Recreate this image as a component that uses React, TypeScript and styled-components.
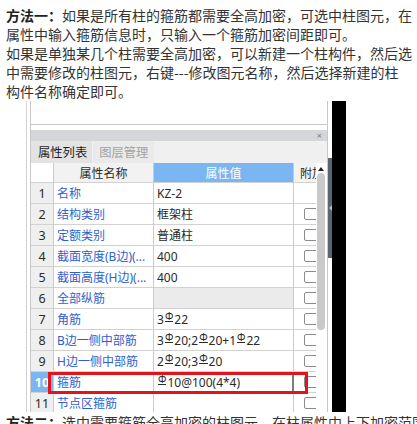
import React from 'react'
import styled, { createGlobalStyle } from 'styled-components'

const GlobalStyle = createGlobalStyle`
  html, body {
    margin: 0;
    padding: 0;
    background: #fff;
  }
`

const Page = styled.div`
  width: 417px;
  height: 424px;
  overflow: hidden;
  padding: 6px 0 0 6px;
  box-sizing: border-box;
  font-family: 'Noto Sans CJK SC', sans-serif;
  color: #333;
`

const Para = styled.p`
  margin: 0;
  font-size: 14px;
  line-height: 19px;
  white-space: nowrap;

  b {
    font-weight: 700;
    color: #222;
  }
`

const Shot = styled.div`
  display: flex;
  height: 311px;
  margin-left: 20px;
  overflow: hidden;
`

const Frame = styled.div`
  width: 302px;
  box-sizing: border-box;
  border-left: 1px solid #d2d2d2;
  padding-left: 3px;
`

const Panel = styled.div`
  height: 100%;
  box-sizing: border-box;
  border-left: 1px solid #c8c8c8;
  border-right: 1px solid #c8c8c8;
  display: flex;
  flex-direction: column;
  font-family: 'Noto Sans', 'Noto Sans CJK SC', sans-serif;
  font-size: 12px;
  color: #333;
`

const TopBox = styled.div`
  height: 24px;
  flex: none;
  box-sizing: border-box;
  border-bottom: 1px solid #c8c8c8;
  margin-bottom: 5px;
`

const TitleBar = styled.div`
  height: 11px;
  flex: none;
  background: #d4d6d9;
  display: flex;
  justify-content: flex-end;
  align-items: center;
  padding-right: 5px;
  font-size: 9px;
  line-height: 1;
  color: #7a7a7a;
`

const TabRow = styled.div`
  height: 22px;
  flex: none;
  display: flex;
  background: #f0f0f0;
`

const Tab = styled.div<{ $active?: boolean }>`
  display: flex;
  align-items: center;
  padding: ${(p) => (p.$active ? '0 5px 0 7px' : '0 6px')};
  background: ${(p) => (p.$active ? '#e3e3e3' : '#eaeaea')};
  color: ${(p) => (p.$active ? '#1e1e1e' : '#a2a2a2')};
  font-family: 'Noto Sans CJK SC', sans-serif;
  font-size: 12.3px;
  margin-right: ${(p) => (p.$active ? '1px' : '0')};
`

const Body = styled.div`
  flex: 1;
  display: flex;
  padding-right: 2px;
  min-height: 0;
`

const TableArea = styled.div`
  position: relative;
  width: 285px;
  flex: none;
`

const Grid = styled.div`
  display: grid;
  grid-template-columns: 23px 100px 140px 22px;
`

type Tone = 'num' | 'head' | 'blue' | 'name' | 'value' | 'gray' | 'pick' | 'corner'

const toneBg: Record<Tone, string> = {
  num: '#efefef',
  head: '#f2f2f2',
  blue: '#7ab6f2',
  name: '#fff',
  value: '#fff',
  gray: '#ebebeb',
  pick: '#7ab6f2',
  corner: '#fff',
}

const Cell = styled.div<{ $tone: Tone; $head?: boolean; $edit?: boolean }>`
  height: ${(p) => (p.$head ? '20px' : '21px')};
  box-sizing: border-box;
  border-right: ${(p) => (p.$edit ? '2px solid #7c7c7c' : '1px solid #cbcbcb')};
  border-bottom: 1px solid #d2d2d2;
  background: ${(p) => toneBg[p.$tone]};
  display: flex;
  align-items: center;
  overflow: hidden;
  white-space: nowrap;
  padding: 0 3px;
  justify-content: ${(p) =>
    p.$head || p.$tone === 'num' || p.$tone === 'pick' ? 'center' : 'flex-start'};
  color: ${(p) =>
    p.$tone === 'blue' || p.$tone === 'pick'
      ? '#fff'
      : p.$tone === 'name'
        ? '#2f5fcf'
        : '#2a2a2a'};
  font-weight: ${(p) => (p.$tone === 'pick' ? 700 : 400)};
  font-size: ${(p) => (p.$tone === 'num' || p.$tone === 'pick' ? '12.5px' : '12px')};
`

const AttachCell = styled(Cell)`
  padding: 0 0 0 10px;
  justify-content: flex-start;
  border-right: none;
`

const HeadLabel = styled.span`
  font-family: 'Noto Sans CJK SC', sans-serif;
`

const Check = styled.span`
  width: 15px;
  height: 12px;
  flex: none;
  box-sizing: border-box;
  border: 1px solid #8c8c8c;
  border-radius: 2px;
  background: #fff;
`

const Rebar = styled.span`
  display: inline-block;
  font-size: 10px;
  line-height: 9px;
  border-bottom: 1px solid #2a2a2a;
  margin: 0 1px;
  position: relative;
  top: -2px;
`

const Highlight = styled.div`
  position: absolute;
  left: 17px;
  top: 209px;
  width: 260px;
  height: 22px;
  box-sizing: border-box;
  border: 3px solid #e3131b;
  pointer-events: none;
`

const Scroll = styled.div`
  width: 9px;
  flex: none;
  display: flex;
  flex-direction: column;
  align-items: center;
`

const ScrollArrow = styled.div`
  margin-top: 4px;
  width: 0;
  height: 0;
  border-left: 3.5px solid transparent;
  border-right: 3.5px solid transparent;
  border-bottom: 4px solid #222;
`

const ScrollThumb = styled.div`
  margin-top: 2px;
  width: 8px;
  height: 157px;
  border-radius: 4px;
  background: #c9c9c9;
`

const Side = styled.div`
  width: 4px;
  flex: none;
  display: flex;
  flex-direction: column;
`

const SideHandle = styled.div`
  margin-top: 57px;
  height: 100px;
  background: #5b6570;
  display: flex;
  align-items: center;
  justify-content: flex-end;

  &::after {
    content: '';
    border-top: 3px solid transparent;
    border-bottom: 3px solid transparent;
    border-right: 3px solid #b4bac0;
  }
`

const BlackBar = styled.div`
  width: 14px;
  flex: none;
  background: #000;
`

const Footer = styled(Para)`
  margin-top: 1px;
`

const R = () => <Rebar>Φ</Rebar>

type Row = { name: string; value: React.ReactNode; gray?: boolean; check: boolean }

const rows: Row[] = [
  { name: '名称', value: 'KZ-2', check: false },
  { name: '结构类别', value: '框架柱', check: true },
  { name: '定额类别', value: '普通柱', check: true },
  { name: '截面宽度(B边)(...', value: '400', check: true },
  { name: '截面高度(H边)(...', value: '400', check: true },
  { name: '全部纵筋', value: '', gray: true, check: true },
  { name: '角筋', value: <>3<R />22</>, check: true },
  { name: 'B边一侧中部筋', value: <>3<R />20;2<R />20+1<R />22</>, check: true },
  { name: 'H边一侧中部筋', value: <>2<R />20;3<R />20</>, check: true },
  { name: '箍筋', value: <><R />10@100(4*4)</>, check: true },
  { name: '节点区箍筋', value: '', check: true },
]

export default function App() {
  return (
    <>
      <GlobalStyle />
      <Page>
        <Para>
          <b>方法一：</b>如果是所有柱的箍筋都需要全高加密，可选中柱图元，在
          <br />
          属性中输入箍筋信息时，只输入一个箍筋加密间距即可。
        </Para>
        <Para>
          如果是单独某几个柱需要全高加密，可以新建一个柱构件，然后选
          <br />
          中需要修改的柱图元，右键---修改图元名称，然后选择新建的柱
          <br />
          构件名称确定即可。
        </Para>
        <Shot>
          <Frame>
            <Panel>
              <TopBox />
              <TitleBar>×</TitleBar>
              <TabRow>
                <Tab $active>属性列表</Tab>
                <Tab>图层管理</Tab>
              </TabRow>
              <Body>
                <TableArea>
                  <Grid>
                    <Cell $tone="corner" $head />
                    <Cell $tone="head" $head>
                      <HeadLabel>属性名称</HeadLabel>
                    </Cell>
                    <Cell $tone="blue" $head>
                      <HeadLabel>属性值</HeadLabel>
                    </Cell>
                    <AttachCell $tone="head" $head style={{ paddingLeft: 6 }}>
                      <HeadLabel>附加</HeadLabel>
                    </AttachCell>
                    {rows.map((r, i) => {
                      const picked = i === 9
                      return (
                        <React.Fragment key={r.name}>
                          <Cell $tone={picked ? 'pick' : 'num'}>{i + 1}</Cell>
                          <Cell $tone="name">{r.name}</Cell>
                          <Cell $tone={r.gray ? 'gray' : 'value'} $edit={picked}>
                            {r.value}
                          </Cell>
                          <AttachCell $tone="value">{r.check && <Check />}</AttachCell>
                        </React.Fragment>
                      )
                    })}
                  </Grid>
                  <Highlight />
                </TableArea>
                <Scroll>
                  <ScrollArrow />
                  <ScrollThumb />
                </Scroll>
              </Body>
            </Panel>
          </Frame>
          <Side>
            <SideHandle />
          </Side>
          <BlackBar />
        </Shot>
        <Footer>
          <b>方法二：</b>选中需要箍筋全高加密的柱图元，在柱属性中上下加密范围中输入柱高。
        </Footer>
      </Page>
    </>
  )
}
